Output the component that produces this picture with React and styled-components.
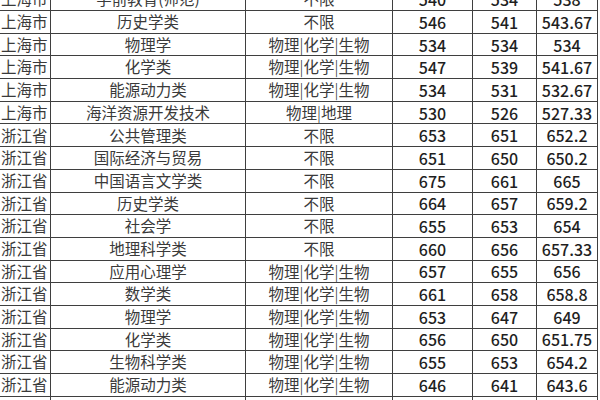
import React from 'react';
import styled, { createGlobalStyle } from 'styled-components';

const GlobalStyle = createGlobalStyle`
  html, body {
    margin: 0;
    padding: 0;
    background: #fff;
    overflow: hidden;
  }
  body {
    font-family: "Noto Sans CJK SC", "Noto Sans", sans-serif;
  }
`;

const Page = styled.div`
  width: 600px;
  height: 400px;
  overflow: hidden;
  background: #fff;
`;

const Table = styled.div`
  margin-top: -11.7px;
  width: 598px;
  border-left: 0;
`;

const Row = styled.div`
  display: grid;
  grid-template-columns: 51px 195px 147px 80px 64px 61px;
  height: 22.7px;
  box-sizing: border-box;
  border-bottom: 1.5px solid #3f3f3f;
`;

const Cell = styled.div`
  display: flex;
  align-items: center;
  justify-content: ${p => (p.left ? 'flex-start' : 'center')};
  padding-left: ${p => (p.left ? '1px' : '0')};
  box-sizing: border-box;
  border-right: 1.5px solid #3f3f3f;
  white-space: nowrap;
  overflow: hidden;
  color: ${p => (p.num ? '#1f1f1f' : '#3a3a3a')};
  font-size: ${p => (p.num ? '16px' : '15.5px')};
  font-weight: ${p => (p.num ? 500 : 400)};
  line-height: 1;
`;

const Bar = styled.span`
  color: #222;
  font-weight: 300;
`;

const rows = [
  ['上海市', '学前教育(师范)', '不限', '540', '534', '538'],
  ['上海市', '历史学类', '不限', '546', '541', '543.67'],
  ['上海市', '物理学', 'pcb', '534', '534', '534'],
  ['上海市', '化学类', 'pcb', '547', '539', '541.67'],
  ['上海市', '能源动力类', 'pcb', '534', '531', '532.67'],
  ['上海市', '海洋资源开发技术', 'pg', '530', '526', '527.33'],
  ['浙江省', '公共管理类', '不限', '653', '651', '652.2'],
  ['浙江省', '国际经济与贸易', '不限', '651', '650', '650.2'],
  ['浙江省', '中国语言文学类', '不限', '675', '661', '665'],
  ['浙江省', '历史学类', '不限', '664', '657', '659.2'],
  ['浙江省', '社会学', '不限', '655', '653', '654'],
  ['浙江省', '地理科学类', '不限', '660', '656', '657.33'],
  ['浙江省', '应用心理学', 'pcb', '657', '655', '656'],
  ['浙江省', '数学类', 'pcb', '661', '658', '658.8'],
  ['浙江省', '物理学', 'pcb', '653', '647', '649'],
  ['浙江省', '化学类', 'pcb', '656', '650', '651.75'],
  ['浙江省', '生物科学类', 'pcb', '655', '653', '654.2'],
  ['浙江省', '能源动力类', 'pcb', '646', '641', '643.6'],
  ['浙江省', '', '', '', '', ''],
];

const renderSubjects = s => {
  if (s === 'pcb') {
    return (
      <>
        物理<Bar>|</Bar>化学<Bar>|</Bar>生物
      </>
    );
  }
  if (s === 'pg') {
    return (
      <>
        物理<Bar>|</Bar>地理
      </>
    );
  }
  return s;
};

export default function App() {
  return (
    <Page>
      <GlobalStyle />
      <Table>
        {rows.map((r, i) => (
          <Row key={i}>
            <Cell left>{r[0]}</Cell>
            <Cell>{r[1]}</Cell>
            <Cell>{renderSubjects(r[2])}</Cell>
            <Cell num>{r[3]}</Cell>
            <Cell num>{r[4]}</Cell>
            <Cell num>{r[5]}</Cell>
          </Row>
        ))}
      </Table>
    </Page>
  );
}
